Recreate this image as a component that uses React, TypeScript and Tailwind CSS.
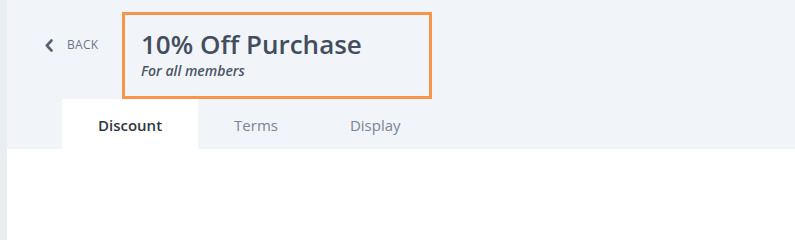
const tabs = ["Discount", "Terms", "Display"]

function Chevron() {
  return (
    <svg width="8" height="13" viewBox="0 0 8 13" fill="none" className="text-[#5b6273]">
      <polyline points="6.5,1.5 1.8,6.5 6.5,11.5" stroke="currentColor" strokeWidth="2.6" strokeLinecap="round" strokeLinejoin="round" />
    </svg>
  )
}

export default function App() {
  const active = "Discount"

  return (
    <div className="flex min-h-screen bg-white font-['Open_Sans',sans-serif]">
      {/* side strip */}
      <div className="w-[7px] shrink-0 bg-[#e9eef2]" />

      <div className="flex-1">
        <div className="bg-[#f1f5f9]">
          {/* header */}
          <div className="flex items-start pl-[38px] pt-[12px]">
            <button className="mt-[25px] flex h-4 w-[77px] items-center gap-[14px] text-[#6e7689]">
              <Chevron />
              <span className="text-[12px] leading-4 tracking-[0.3px] uppercase">Back</span>
            </button>

            <div className="w-[310px] border-[3px] border-[#f7954a] px-[16px] pt-[12px] pb-[15px]">
              <h1 className="text-[26px] leading-[34px] font-semibold text-[#434d5e]">10% Off Purchase</h1>
              <p className="text-[14px] leading-5 font-semibold italic text-[#4d5566]">For all members</p>
            </div>
          </div>

          {/* tabs */}
          <div className="flex pl-[55px]">
            {tabs.map((tab) => (
              <div
                key={tab}
                className={`flex h-[50px] items-center px-9 pt-[2px] text-[15px] ${
                  tab === active ? "bg-white font-semibold text-[#2f3640]" : "text-[#7b8394]"
                }`}
              >
                {tab}
              </div>
            ))}
          </div>
        </div>
      </div>
    </div>
  )
}
